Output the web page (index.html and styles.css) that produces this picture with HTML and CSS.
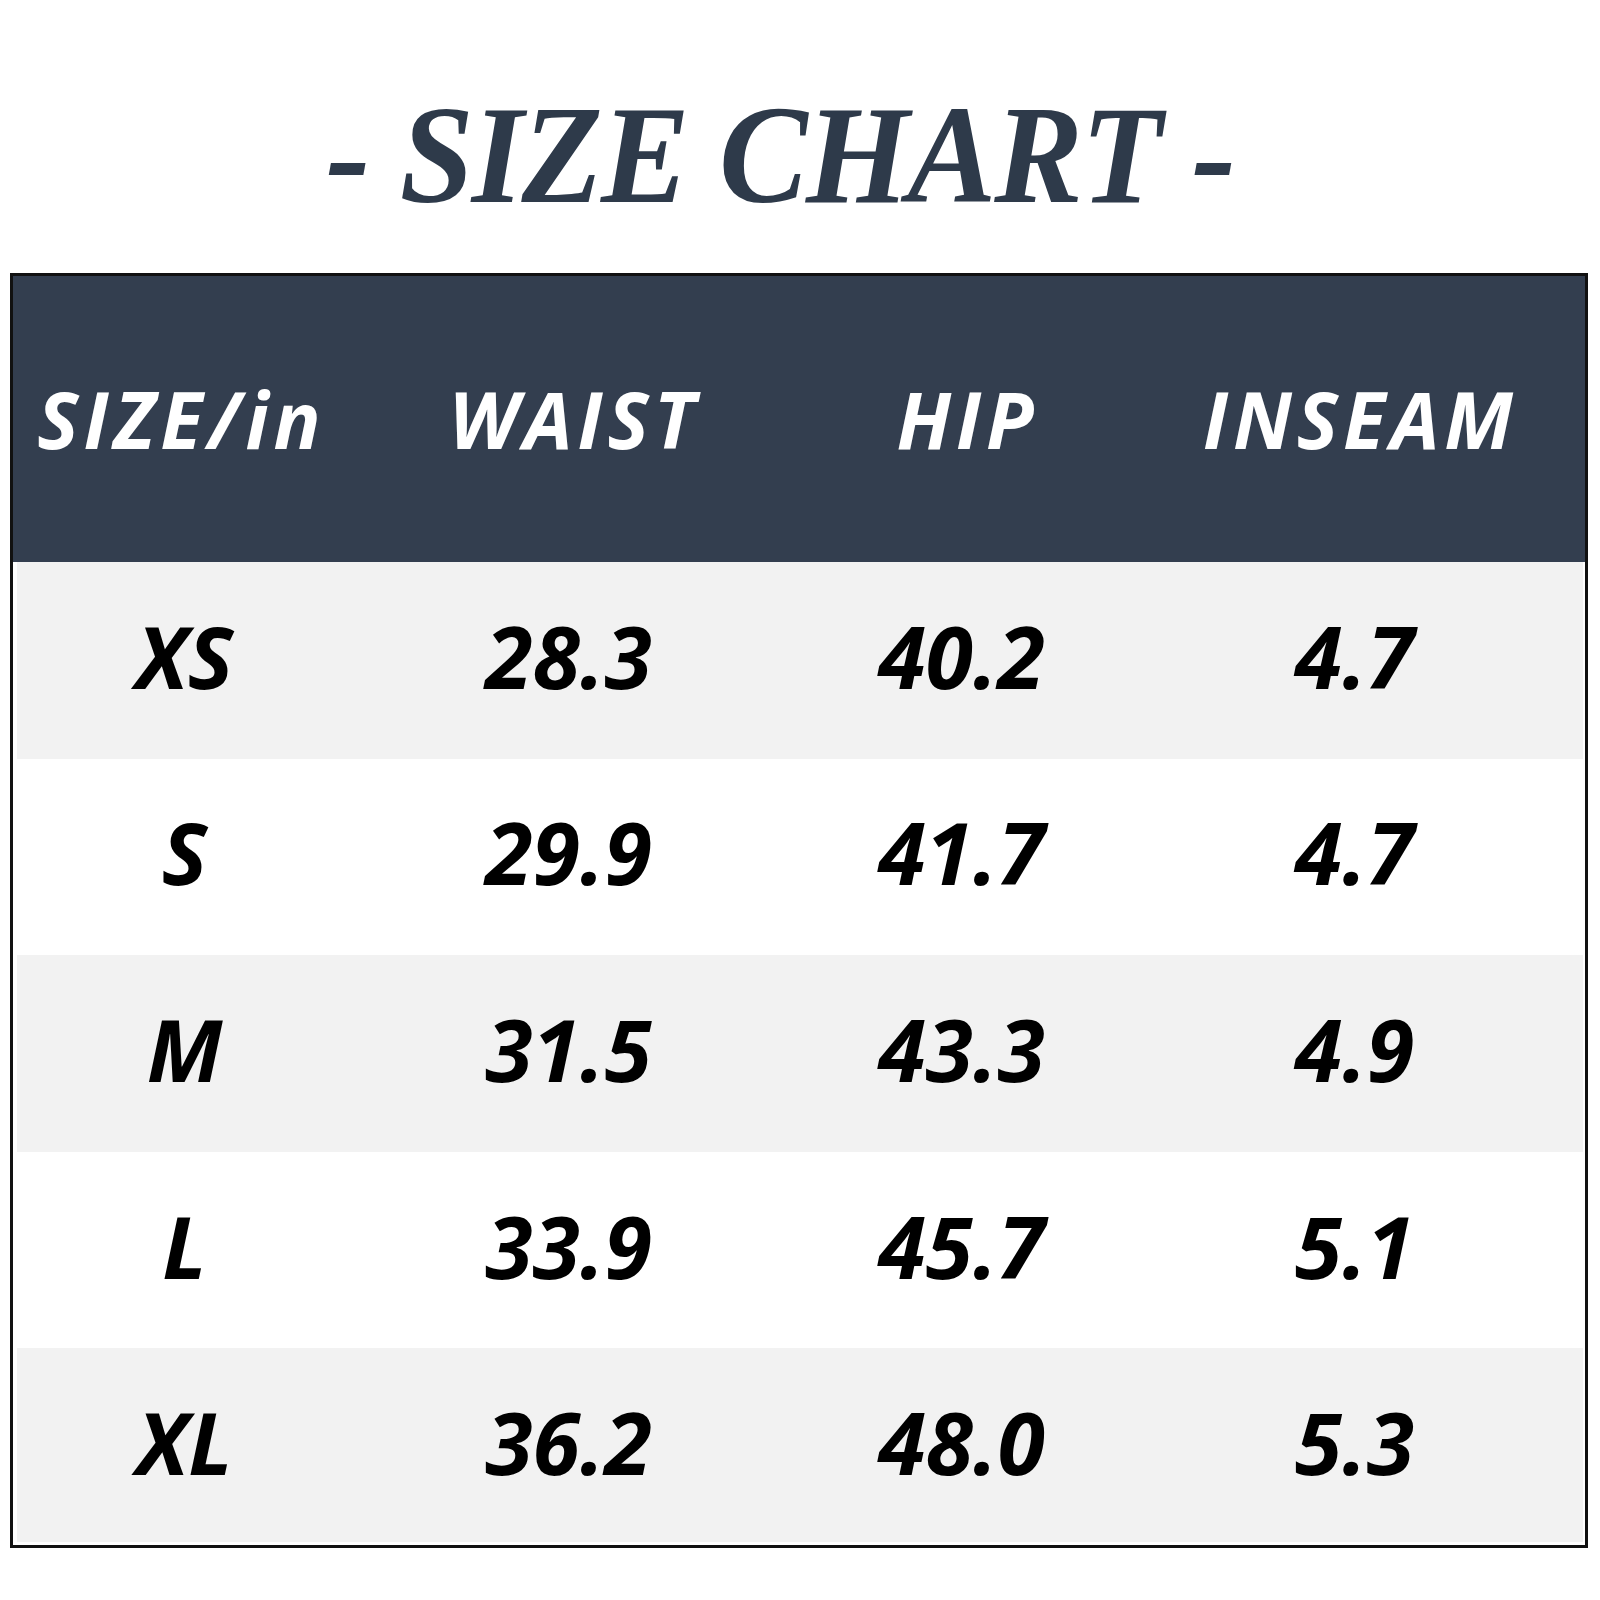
FILE: index.html
```html
<!DOCTYPE html>
<html>
<head>
<meta charset="utf-8">
<link rel="stylesheet" href="styles.css">
</head>
<body>
<div class="page">
  <h1 class="title"><span class="title-text">- SIZE CHART -</span></h1>
  <div class="chart">
    <div class="row head">
      <div class="cell">SIZE/in</div>
      <div class="cell">WAIST</div>
      <div class="cell">HIP</div>
      <div class="cell">INSEAM</div>
    </div>
    <div class="body">
      <div class="row alt"><div class="cell">XS</div><div class="cell">28.3</div><div class="cell">40.2</div><div class="cell">4.7</div></div>
      <div class="row"><div class="cell">S</div><div class="cell">29.9</div><div class="cell">41.7</div><div class="cell">4.7</div></div>
      <div class="row alt"><div class="cell">M</div><div class="cell">31.5</div><div class="cell">43.3</div><div class="cell">4.9</div></div>
      <div class="row"><div class="cell">L</div><div class="cell">33.9</div><div class="cell">45.7</div><div class="cell">5.1</div></div>
      <div class="row alt last"><div class="cell">XL</div><div class="cell">36.2</div><div class="cell">48.0</div><div class="cell">5.3</div></div>
    </div>
  </div>
</div>
</body>
</html>
```

FILE: styles.css
```css
html, body {
  margin: 0;
  padding: 0;
  background: #ffffff;
}
.page {
  width: 1600px;
  height: 1600px;
  padding-top: 85px;
  box-sizing: border-box;
}
.title {
  margin: 0;
  height: 188px;
  display: flex;
  justify-content: center;
  align-items: flex-start;
  padding-right: 40px;
  box-sizing: border-box;
}
.title-text {
  display: inline-block;
  font-family: "Liberation Serif", serif;
  font-style: italic;
  font-weight: 700;
  font-size: 140px;
  line-height: 140px;
  color: #2e3a4a;
  white-space: pre;
  transform: scaleX(0.95);
  letter-spacing: -2px;
}
.chart {
  margin-left: 10px;
  width: 1578px;
  height: 1275px;
  border: 3px solid #111111;
  box-sizing: border-box;
  display: flex;
  flex-direction: column;
  background: #ffffff;
}
.row {
  display: grid;
  grid-template-columns: repeat(4, 1fr);
  align-items: center;
  font-family: "Open Sans", "Noto Sans", sans-serif;
  font-style: italic;
  font-weight: 700;
}
.cell {
  text-align: center;
  padding-right: 56px;
}
.head {
  height: 286px;
  background: #333e4f;
  color: #ffffff;
  font-size: 78px;
  letter-spacing: 5px;
}
.body {
  flex: 1;
  display: flex;
  flex-direction: column;
}
.body .row {
  flex: 1;
  color: #000000;
  font-size: 86px;
  background: #ffffff;
  padding-bottom: 10px;
}
.body .cell {
  padding-right: 68px;
}
.body .cell:first-child {
  padding-right: 50px;
}
.body .row.alt {
  background: #f2f2f2;
  box-shadow: inset 4px 0 0 #ffffff, inset -2px 0 0 #ffffff;
}
.body .row.last {
  box-shadow: inset 4px 0 0 #ffffff, inset -2px 0 0 #ffffff, inset 0 -3px 0 #ffffff;
}
```
